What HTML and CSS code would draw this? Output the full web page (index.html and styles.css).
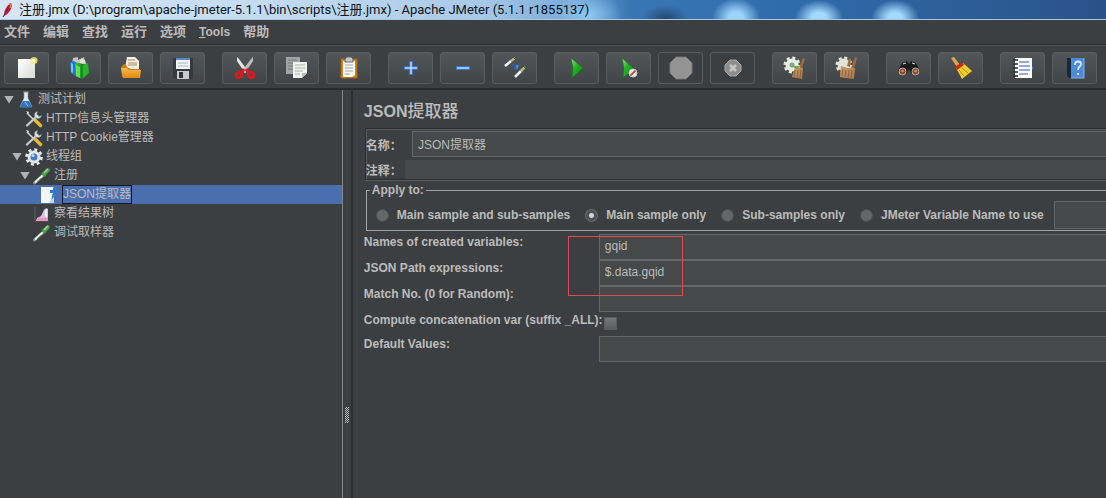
FILE: index.html
```html
<!DOCTYPE html>
<html lang="zh-CN">
<head>
<meta charset="utf-8">
<title>Apache JMeter (5.1.1 r1855137)</title>
<link rel="stylesheet" href="styles.css">
</head>
<body>
<svg class="defs" width="0" height="0" aria-hidden="true">
  <defs>
    <linearGradient id="silver" x1="0" y1="0" x2="1" y2="1"><stop offset="0" stop-color="#fff"/><stop offset="1" stop-color="#d9dbd8"/></linearGradient>
    <linearGradient id="orange" x1="0" y1="0" x2="0" y2="1"><stop offset="0" stop-color="#f5b94c"/><stop offset="1" stop-color="#e08a12"/></linearGradient>
    <linearGradient id="green" x1="0" y1="0" x2="1" y2="1"><stop offset="0" stop-color="#9be08f"/><stop offset=".45" stop-color="#1fb01f"/><stop offset="1" stop-color="#0b8a10"/></linearGradient>
    <linearGradient id="wood" x1="0" y1="0" x2="1" y2="1"><stop offset="0" stop-color="#c9a070"/><stop offset="1" stop-color="#a87443"/></linearGradient>
    <linearGradient id="leaf" x1="0" y1="0" x2="1" y2="0"><stop offset="0" stop-color="#3fd03a"/><stop offset="1" stop-color="#12951a"/></linearGradient>
  </defs>
  <symbol id="tools" viewBox="0 0 18 18">
    <path d="M2 3 12 13" stroke="#d3d7da" stroke-width="1.5"/>
    <path d="M1 1l3 1-1 2z" fill="#eee"/>
    <path d="M10 10l5.500 5.500" stroke="#e8bb2c" stroke-width="3.400" stroke-linecap="round"/>
    <path d="M2 15.500 12 6" stroke="#c5c9cb" stroke-width="2.400" stroke-linecap="round"/>
    <path d="M12.500 1.500a3.500 3.500 0 1 0 4 4l-2.500 1-2.300-2.200z" fill="#e7ebed" stroke="#778086" stroke-width=".6"/>
  </symbol>
  <symbol id="pipette" viewBox="0 0 18 18">
    <path d="M1.500 16 11 7.500" stroke="#89908c" stroke-width="3" stroke-linecap="round"/>
    <path d="M2 15.500 10.500 7.500" stroke="#f4f6f4" stroke-width="2"/>
    <path d="M4 15 8 11" stroke="#6fae72" stroke-width="1"/>
    <path d="M9 5.500 12.500 9.500" stroke="#3c7d3c" stroke-width="2.200"/>
    <path d="M11 7 14.800 3" stroke="#4d9f4b" stroke-width="4" stroke-linecap="round"/>
    <path d="M11.500 5.500 14.500 2.500" stroke="#a9d9a1" stroke-width="1.300" stroke-linecap="round"/>
  </symbol>
</svg>

<div class="window">
  <header class="titlebar">
    <svg class="feather" viewBox="0 0 12 18" aria-hidden="true"><path d="M2 15C2 9 5 4 9 2c2 3 0 8-5 12z" fill="#c71838"/><path d="M1 16 8 4" stroke="#6d2250" stroke-width="1"/><path d="M7 3c2 0 2 2 1 4" stroke="#ef7d3d" stroke-width="1.500" fill="none"/></svg>
    <h1 class="window-title">注册.jmx (D:\program\apache-jmeter-5.1.1\bin\scripts\注册.jmx) - Apache JMeter (5.1.1 r1855137)</h1>
  </header>

  <nav class="menubar" aria-label="菜单">
    <button class="menu" type="button">文件</button>
    <button class="menu" type="button">编辑</button>
    <button class="menu" type="button">查找</button>
    <button class="menu" type="button">运行</button>
    <button class="menu" type="button">选项</button>
    <button class="menu latin" type="button"><u>T</u>ools</button>
    <button class="menu" type="button">帮助</button>
  </nav>

  <div class="toolbar" role="toolbar" aria-label="工具栏">
    <div class="group">
      <button class="tool" type="button" aria-label="New"><svg viewBox="0 0 24 24"><path d="M3 3h17v19H3z" fill="url(#silver)"/><circle cx="19" cy="4.500" r="3.600" fill="#f6ee7a" opacity=".8"/><circle cx="19" cy="4.500" r="1.600" fill="#fffbd0"/></svg></button>
      <button class="tool" type="button" aria-label="Templates"><svg viewBox="0 0 24 24"><path d="M6 2l5-1v3l6-3 1 6-9 3-4-2z" fill="#c9c5bd"/><path d="M3 6l4-1 3 2v14l-6-4z" fill="#2277cf"/><path d="M4 7l2 1v9l-2-1z" fill="#71c3f4"/><path d="M8 8l5-2 2 2v15l-6-3z" fill="url(#leaf)"/><path d="M15 9l6-2 1 10-7 6z" fill="#27b32c"/><path d="M9 9l4 2v11l-4-2z" fill="#64e052"/><path d="M15 9v14" stroke="#0c7517"/><path d="M12 7l2-4 4 1 1 4" fill="#e4e4dc"/></svg></button>
      <button class="tool" type="button" aria-label="Open"><svg viewBox="0 0 24 24"><path d="M6 12 8 1h8l4 4v9z" fill="#f5f0e6"/><path d="M9 4h7M9 7h9M9 9h9" stroke="#ad8a5c"/><path d="M2 11l3-3h2l1 3 3 2h10v8H3z" fill="#c77f18"/><path d="M2 12h6l2 2h12l-1 8H4z" fill="url(#orange)"/></svg></button>
      <button class="tool" type="button" aria-label="Save"><svg viewBox="0 0 24 24"><path d="M2 2h20v21H4l-2-2z" fill="#353a40"/><path d="M5 2h14v11H5z" fill="#f2f5fb"/><path d="M5 2h14v2H5z" fill="#5e88c5"/><path d="M7 7h10M7 10h10" stroke="#a4b1c6"/><path d="M6 15h12v8H6z" fill="#c9cccf"/><path d="M8 16h4v6H8z" fill="#33373b"/></svg></button>
    </div>
    <div class="group">
      <button class="tool" type="button" aria-label="Cut"><svg viewBox="0 0 24 24"><path d="M4 1 6 3l9 12-3 2L4 5z" fill="#e4e7e8"/><path d="M20 1l-2 2-9 12 3 2 8-12z" fill="#b9bebf"/><g fill="none" stroke="#d91920" stroke-width="3"><ellipse cx="6" cy="19" rx="3" ry="2.500" transform="rotate(-35 6 19)"/><ellipse cx="18" cy="19" rx="3" ry="2.500" transform="rotate(35 18 19)"/><path d="M8 17l3-4M16 17l-3-4"/></g></svg></button>
      <button class="tool" type="button" aria-label="Copy"><svg viewBox="0 0 24 24"><path d="M1 1h14v17H1z" fill="#a1a4a3"/><path d="M3 4h9M3 7h9M3 10h9M3 13h7" stroke="#777b7a"/><path d="M8 6h14v11l-5 5H8z" fill="#f2f3f1"/><path d="M10 9h10M10 12h10M10 15h8M10 18h5" stroke="#aeb1ae"/><path d="M17 22v-5h5z" fill="#babdba"/></svg></button>
      <button class="tool" type="button" aria-label="Paste"><svg viewBox="0 0 24 24"><path d="M4 3h16v19H4z" fill="#d78520" stroke="#a95f0f"/><path d="M6 5h12v14l-3 2H6z" fill="#fbfbf5"/><path d="M8 9h8M8 12h8M8 15h8M8 18h5" stroke="#9aa3a8"/><path d="M8 3l2-2h4l2 2v3H8z" fill="#c3c8ca" stroke="#62686a"/></svg></button>
    </div>
    <div class="group">
      <button class="tool" type="button" aria-label="Expand all"><svg viewBox="0 0 24 24"><path d="M12 5v14M5 12h14" stroke="#3b7be0" stroke-width="3.600"/><path d="M12 6v12M6 12h12" stroke="#b9dbff" stroke-width="1.500"/></svg></button>
      <button class="tool" type="button" aria-label="Collapse all"><svg viewBox="0 0 24 24"><path d="M5 12h14" stroke="#3b7be0" stroke-width="3.600"/><path d="M6 12h12" stroke="#b9dbff" stroke-width="1.500"/></svg></button>
      <button class="tool" type="button" aria-label="Toggle"><svg viewBox="0 0 24 24"><path d="M2 10 8 5M12 21l6-6" stroke="#f1f2f0" stroke-width="2.600"/><path d="M8 5l4-3M18 15l4-4" stroke="#b9bb75" stroke-width="2.600"/><path d="M10 1l3 3M20 10l3 3" stroke="#3d493d" stroke-width="1"/><path d="M9 8l6 1-1 5-3-1z" fill="#315fae"/><path d="M13 9h3l-2 5z" fill="#5a8ad3"/></svg></button>
    </div>
    <div class="group">
      <button class="tool" type="button" aria-label="Start"><svg viewBox="0 0 24 24"><path d="M6 2 18 12 7 22l1-10z" fill="url(#green)" stroke="#13761a" stroke-width=".6"/></svg></button>
      <button class="tool" type="button" aria-label="Start no pauses"><svg viewBox="0 0 24 24"><path d="M5 2 17 13 6 22l1-10z" fill="url(#green)" stroke="#13761a" stroke-width=".6"/><circle cx="16" cy="17" r="4" fill="#eee" stroke="#c9c9c9"/><path d="M13.500 19.500l5-5" stroke="#cf4b50" stroke-width="2"/></svg></button>
      <button class="tool" type="button" aria-label="Stop" disabled><svg viewBox="0 0 24 24"><path d="M7 1h10l6 6v10l-6 6H7l-6-6V7z" fill="#949494" stroke="#777"/></svg></button>
      <button class="tool" type="button" aria-label="Shutdown" disabled><svg viewBox="0 0 24 24"><path d="M9 4h6l5 5v6l-5 5H9l-5-5V9z" fill="#8e8e8e" stroke="#aaa"/><path d="M9 9l6 6M15 9l-6 6" stroke="#c6c6c6" stroke-width="2.500"/></svg></button>
    </div>
    <div class="group">
      <button class="tool" type="button" aria-label="Clear"><svg viewBox="0 0 24 24"><circle cx="9" cy="9" r="6.500" fill="#e7eee5"/><circle cx="9" cy="9" r="7" fill="none" stroke="#e7eee5" stroke-width="3" stroke-dasharray="3 2.500"/><circle cx="9" cy="9" r="2.500" fill="#86a87a"/><path d="M20 2l2 1-3 9-3-1z" fill="#9b6b3f"/><path d="M12 11l8 1-1 11-5-1-5-1z" fill="url(#wood)"/><path d="M12 14l-1 7M15 14l-1 8M18 14l-1 8" stroke="#815332" stroke-width=".7"/><path d="M7 10l9 0-1 3z" fill="#6ca650"/></svg></button>
      <button class="tool" type="button" aria-label="Clear all"><svg viewBox="0 0 24 24"><circle cx="9" cy="9" r="6.500" fill="#e2e3d9"/><circle cx="9" cy="9" r="7" fill="none" stroke="#e2e3d9" stroke-width="3" stroke-dasharray="3 2.500"/><path d="M20 1l2 1-3 11-3-1zM14 2l2 1-1 8-3-1z" fill="#9b6b3f"/><path d="M6 10l7 2 7 0-1 11-8-1-6-1z" fill="url(#wood)"/><path d="M8 13l-1 7M11 14l-1 7M14 14l-1 8M17 14l-1 8" stroke="#815332" stroke-width=".7"/></svg></button>
    </div>
    <div class="group">
      <button class="tool" type="button" aria-label="Search"><svg viewBox="0 0 24 24"><path d="M5 7l5-2 2 3 2-3 5 2 4 8-4 5-5-3-2-4-2 4-5 3-4-5z" fill="#17191a"/><path d="M6 8l3-1M15 7l3 1" stroke="#d6d6d6" stroke-width="1.300"/><circle cx="5.500" cy="15.500" r="3.500" fill="#8b4d2c" stroke="#b9afa4"/><circle cx="18.500" cy="15.500" r="3.500" fill="#8b4d2c" stroke="#b9afa4"/><circle cx="5.500" cy="15" r="1.300" fill="#dc8b59"/><circle cx="18.500" cy="15" r="1.300" fill="#dc8b59"/></svg></button>
      <button class="tool" type="button" aria-label="Reset search"><svg viewBox="0 0 24 24"><path d="M2 2 5 1l6 8-3 2z" fill="#dca84b"/><path d="M7 12l7-5 9 8-10 8z" fill="#f4cd28"/><path d="M10 14l5 6M13 12l6 5" stroke="#b98d11"/><path d="M6 11l7-5 2 3-7 5z" fill="#c7281b"/></svg></button>
    </div>
    <div class="group">
      <button class="tool" type="button" aria-label="Function helper"><svg viewBox="0 0 24 24"><path d="M4 2h17v20H4z" fill="#fafcff"/><path d="M8 6h10M8 10h11M8 14h11M8 18h9" stroke="#3859a4" stroke-width="1.200"/><path d="M2 4h5M2 8h5M2 12h5M2 16h5M2 20h5" stroke="#22272d" stroke-width="1.300"/><path d="M21 10l2 2-2 2z" fill="#3678ce"/></svg></button>
      <button class="tool" type="button" aria-label="Help"><svg viewBox="0 0 24 24"><path d="M4 2h17v20H6l-2-2z" fill="#4b8bd8"/><path d="M4 2h4v20H6l-2-2z" fill="#18273c"/><path d="M21 2v20H8" fill="none" stroke="#80b4ed"/><path d="M12 9c0-5 6-4 6-1 0 3-3 2-3 6M15 17v2" fill="none" stroke="#d9eaff" stroke-width="1.800"/></svg></button>
    </div>
    <div class="group">
      <button class="tool" type="button" aria-label="More"></button>
    </div>
  </div>

  <main class="workspace">
    <aside class="sidebar">
      <ul class="tree" role="tree">
        <li class="node depth0" role="treeitem"><span class="arrow"></span><svg class="icon" viewBox="0 0 18 18"><path d="M6 1h6M7 1v6L3 16h12L11 7V1z" fill="#e6edf2" stroke="#8b99a4" stroke-width=".7"/><path d="M6 10h6l3 6H3z" fill="#2478c5"/><path d="M8 11l3 4" stroke="#97d1f4"/></svg><span class="name">测试计划</span></li>
        <li class="node depth1 leaf" role="treeitem"><svg class="icon"><use href="#tools"/></svg><span class="name">HTTP信息头管理器</span></li>
        <li class="node depth1 leaf" role="treeitem"><svg class="icon"><use href="#tools"/></svg><span class="name">HTTP Cookie管理器</span></li>
        <li class="node depth1" role="treeitem"><span class="arrow"></span><svg class="icon" viewBox="0 0 18 18"><circle cx="9" cy="9" r="7.500" fill="none" stroke="#e8edf2" stroke-width="2.600" stroke-dasharray="3 2.900"/><circle cx="9" cy="9" r="5" fill="#477bb9" stroke="#e0e6ec" stroke-width="3"/><circle cx="8" cy="7.500" r="1.600" fill="#bddcf9"/></svg><span class="name">线程组</span></li>
        <li class="node depth2" role="treeitem"><span class="arrow"></span><svg class="icon"><use href="#pipette"/></svg><span class="name">注册</span></li>
        <li class="node depth3 leaf selected" role="treeitem" aria-selected="true"><svg class="icon" viewBox="0 0 18 18"><path d="M0 1h13v16H0z" fill="#f4f6f8"/><path d="M8 17c1-3 3-4 5-4v4z" fill="#cfd5dc"/><path d="M9 4h3V1l5 4-5 5V7H9z" fill="#2e78ce"/><path d="M11 8l4 2-5 4 1-3z" fill="#3c83d4"/></svg><span class="name">JSON提取器</span></li>
        <li class="node depth2 leaf" role="treeitem"><svg class="icon" viewBox="0 0 18 18"><path d="M2 2v14h14" stroke="#5b5f63" fill="none"/><path d="M4 13l4-2 3-6 2-2 2 1v12H3z" fill="#d9c5ec"/><path d="M3 16l3-4 4 1 5-1v4z" fill="#eb8fc4"/><path d="M12 5l2-1v9l-2-2z" fill="#f5f1fb"/></svg><span class="name">察看结果树</span></li>
        <li class="node depth2 leaf" role="treeitem"><svg class="icon"><use href="#pipette"/></svg><span class="name">调试取样器</span></li>
      </ul>
    </aside>
    <div class="divider"><span class="grip"></span></div>

    <form class="editor">
      <h2 class="heading">JSON<span class="han">提取器</span></h2>
      <div class="identity">
        <div class="pair named"><label for="name">名称：</label><input id="name" class="field" type="text" value="JSON提取器"></div>
        <div class="pair"><label for="comment">注释：</label><input id="comment" class="field flat" type="text"></div>
      </div>

      <fieldset class="scope">
        <legend>Apply to:</legend>
        <div class="choices">
          <label class="choice"><input type="radio" name="scope">Main sample and sub-samples</label>
          <label class="choice"><input type="radio" name="scope" checked>Main sample only</label>
          <label class="choice"><input type="radio" name="scope">Sub-samples only</label>
          <label class="choice"><input type="radio" name="scope">JMeter Variable Name to use</label>
          <input class="field variable" type="text" aria-label="JMeter Variable Name">
        </div>
      </fieldset>

      <div class="params">
        <label for="names">Names of created variables:</label><input id="names" class="field" type="text" value="gqid">
        <label for="paths">JSON Path expressions:</label><input id="paths" class="field" type="text" value="$.data.gqid">
        <label for="match">Match No. (0 for Random):</label><input id="match" class="field" type="text">
        <label for="concat">Compute concatenation var (suffix _ALL):</label><input id="concat" class="check" type="checkbox">
        <label for="defaults">Default Values:</label><input id="defaults" class="field" type="text">
        <span class="highlight"></span>
      </div>
    </form>
  </main>
</div>
</body>
</html>
```
FILE: styles.css
```css
* { box-sizing: border-box; }

body {
  margin: 0;
  background: #3c3f41;
  color: #bbbbbb;
  font-family: "Liberation Sans", "Noto Sans CJK SC", sans-serif;
  font-size: 12px;
}

button, input { font: inherit; color: inherit; }

.defs { position: absolute; }

.window {
  display: flex;
  flex-direction: column;
  min-height: 100vh;
  overflow: hidden;
}

.titlebar {
  display: flex;
  align-items: center;
  gap: 5px;
  height: 20px;
  padding-left: 2px;
  border-bottom: 1px solid #a4cbe3;
  background:
    radial-gradient(ellipse 34px 22px at 588px 15px, #8fcaf3, transparent),
    radial-gradient(ellipse 24px 14px at 665px 19px, #24486f, transparent),
    radial-gradient(ellipse 24px 20px at 736px 18px, #9bd4fa 30%, transparent),
    radial-gradient(ellipse 24px 18px at 819px 18px, #a2dafd 30%, transparent),
    radial-gradient(ellipse 24px 18px at 895px 18px, #a2dafd 30%, transparent),
    linear-gradient(90deg, #d6e6f5 0, #c1d9ef 300px, #a9c9e8 480px, #79aad8 570px, #3a76b5 630px, #2f6baa 800px, #2a5288 1106px);
}

.feather { width: 12px; height: 18px; }

.window-title {
  margin: 0;
  color: #0b1420;
  font: 400 13px/18px Roboto, "Noto Sans CJK SC", sans-serif;
  white-space: nowrap;
}

.menubar {
  display: flex;
  gap: 13px;
  height: 25px;
  padding: 0 4px;
  border-bottom: 1px solid #292b2d;
}

.menu {
  padding: 0;
  border: 0;
  background: none;
  font-size: 13px;
  font-weight: 700;
  line-height: 24px;
}

.latin { font-size: 12px; }

.toolbar {
  display: flex;
  gap: 17px;
  padding: 6px 4px 4px;
  border-top: 1px solid #555759;
  border-bottom: 2px solid #282a2c;
  overflow: hidden;
}

.group { display: flex; gap: 7px; flex: none; }

.tool {
  display: grid;
  place-items: center;
  width: 45px;
  height: 32px;
  padding: 0;
  border: 1px solid #5a5d5e;
  border-radius: 3px;
  background: linear-gradient(#515658, #414547);
}

.tool:disabled { background: #3c3f41; }
.tool svg { width: 24px; height: 24px; }

.workspace { display: flex; flex: 1; }

.sidebar {
  flex: none;
  width: 31%;
  border-right: 1px solid #85888a;
}

.tree { margin: 0; padding: 0; list-style: none; }

.node {
  display: flex;
  align-items: center;
  height: 19px;
  gap: 3px;
  padding-left: 4px;
}

.depth1 { padding-left: 12px; }
.depth2 { padding-left: 20px; }
.depth3 { padding-left: 28px; }
.leaf::before { content: ""; width: 10px; }

.arrow {
  width: 10px;
  height: 8px;
  background: #b0b2b3;
  clip-path: polygon(0 0, 100% 0, 50% 100%);
}

.icon { width: 18px; height: 18px; }
.name { line-height: 17px; }
.selected { background: #4b6eaf; }
.selected .name { border: 1px solid #101828; }

.divider {
  display: flex;
  flex: none;
  align-items: center;
  justify-content: center;
  width: 10px;
  padding-top: 242px;
  border-right: 2px solid #2b2d2f;
}

.grip {
  width: 4px;
  height: 16px;
  background: repeating-conic-gradient(#c4c6c7 0 25%, #303234 0 50%) 0 0 / 2px 2px;
}

.editor {
  flex: 1;
  min-width: 0;
  padding: 10px 0 0 11px;
  font-weight: 700;
}

.heading {
  margin: 0 0 4px;
  font-size: 16px;
  line-height: 24px;
}

.han { font-size: 17px; font-weight: 500; }

.identity {
  display: grid;
  gap: 3px;
  margin-left: 1px;
  padding-top: 2px;
  border: 1px solid #2b2d2f;
  border-right: 0;
  box-shadow: inset 1px 1px #595c5e, 0 1px #595c5e;
}

.pair {
  display: flex;
  align-items: center;
  gap: 3px;
  white-space: nowrap;
}

.named { gap: 10px; }

.field {
  flex: 1;
  min-width: 0;
  height: 26px;
  padding: 0 5px 2px;
  border: 1px solid #646768;
  border-right: 0;
  border-radius: 0;
  background: #45494a;
  font-weight: 400;
}

.flat { height: 19px; border: 0; }

.scope {
  min-width: 0;
  margin: 3px 0 0 2px;
  padding: 0 0 1px;
  border: 1px solid #a0a2a3;
  border-right: 0;
}

.scope legend { margin-left: 3px; padding: 0 2px; line-height: 14px; }

.choices {
  display: flex;
  align-items: center;
  gap: 15px;
  padding: 4px 0 0 9px;
  white-space: nowrap;
}

.choice { display: flex; align-items: center; gap: 8px; }

.choice input {
  appearance: none;
  width: 13px;
  height: 13px;
  margin: 0;
  border: 1px solid #4c4f51;
  border-radius: 50%;
  background: #646769;
}

.choice input:checked {
  border-color: #6b6e70;
  background: radial-gradient(circle, #d5d5d5 0 2px, #505355 3px);
}

.variable { height: 28px; margin-left: -5px; }

.params {
  position: relative;
  display: grid;
  grid-template-columns: 235px 1fr;
  grid-template-rows: 26px 26px 26px 24px 26px;
  padding-top: 3px;
  white-space: nowrap;
}

.params label { line-height: 16px; }

.check {
  appearance: none;
  width: 13px;
  height: 13px;
  margin: 5px;
  border: 1px solid #5b5e60;
  background: linear-gradient(#737678, #5b5e60);
}

.highlight {
  position: absolute;
  left: 204px;
  top: 5px;
  width: 115px;
  height: 60px;
  border: 1px solid #dc4a54;
  pointer-events: none;
}
```
